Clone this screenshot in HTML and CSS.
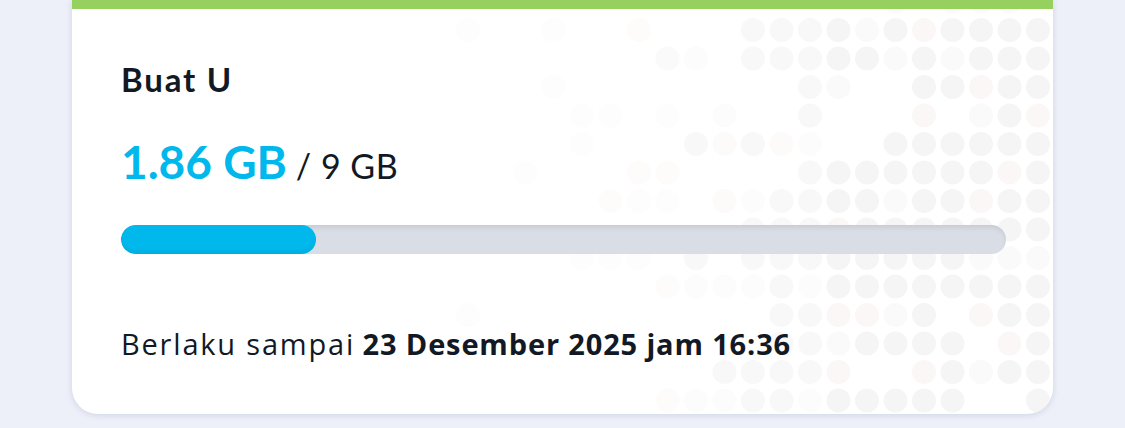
FILE: index.html
```html
<!DOCTYPE html>
<html lang="id">
<head>
<meta charset="utf-8">
<title>Kuota</title>
<link rel="stylesheet" href="styles.css">
</head>
<body>
<div class="page">
  <section class="card">
    <svg class="dots" viewBox="0 0 981 405" preserveAspectRatio="none" aria-hidden="true">
      <g id="dots"></g>
    </svg>
    <div class="content">
      <h2 class="title">Buat U</h2>
      <div class="usage"><span class="used">1.86 GB</span> <span class="total">/ 9 GB</span></div>
      <div class="track"><div class="fill" style="width:22%"></div></div>
      <p class="expiry"><span class="lead">Berlaku sampai</span> <strong>23 Desember 2025 jam 16:36</strong></p>
    </div>
  </section>
</div>
<script src="dots.js"></script>
</body>
</html>
```
FILE: dots.js
```js
(function () {
  var rows = {
    0: "c1f c2f c3f c5f",
    1: "c0g c1g c2g c3g c4p c5g c6f c7g c8g c9g c10g c14p c17f c20f",
    2: "c0g c1g c2g c3f c4g c5f c6g c7g c8g c9g c10g c12f c13g",
    3: "c0g c1g c2p c3g c4g c7f c8g c17f",
    4: "c0p c1g c2f c4p c8g c11f c13f c15f c16f",
    5: "c0g c1g c2g c3g c4g c5g c8f c9p c10g c11p c12g c16f",
    6: "c0g c1p c2g c3g c4g c5g c6g c7g c8g c13p c14p c18f",
    7: "c0g c1g c2p c3g c4g c5f c6g c7g c8g c9g c10f c11p c13f c14f c15p",
    8: "c0g c1g c2g c3g c4g c5g c6g c7p c8g c9g c10g",
    9: "c0f c1f c2f c3g c4g c5g c6g c7g c8g c9g c10g c12g c14f c15f c16f",
    10: "c0g c1g c2g c3g c4g c5g c6g c7g c8f c9g c10f c11f c12f c13p",
    11: "c0g c1g c2p c4g c5f c6p c7p c8g c9g c20f",
    12: "c0g c1p c3g c4g c5g c6g c7f c8g c9g",
    13: "c0g c1g c2f c3g c4p c7p c8g c9g c10g c11g",
    14: "c0g c3g c4g c5g c6g c7g c8f c9g c10g c11f c12f c13p"
  };
  var colors = { g: "#f5f5f6", p: "#fcf7f7", f: "#fafafa" };
  var ns = "http://www.w3.org/2000/svg";
  var g = document.getElementById("dots");
  Object.keys(rows).forEach(function (r) {
    rows[r].split(" ").forEach(function (tok) {
      var m = tok.match(/c(\d+)([gpf])/);
      var c = parseInt(m[1], 10);
      var x = 1038 - 28.5 * c - 72;
      var y = 1.5 + 28.5 * parseInt(r, 10) - 9;
      var el = document.createElementNS(ns, "circle");
      el.setAttribute("cx", x);
      el.setAttribute("cy", y);
      el.setAttribute("r", 12);
      el.setAttribute("fill", colors[m[2]]);
      var op = c < 8 ? 1 : (c < 13 ? 0.65 : 0.45);
      el.setAttribute("fill-opacity", op);
      g.appendChild(el);
    });
  });
})();
```
FILE: styles.css
```css
* { box-sizing: border-box; }
html, body { margin: 0; padding: 0; }
body {
  background: #edf0f9;
  font-family: "Lato", "Noto Sans", sans-serif;
  color: #121924;
}
.page {
  padding: 0 72px;
  height: 428px;
}
.card {
  position: relative;
  height: 414px;
  background: #ffffff;
  border-top: 9px solid #96d160;
  border-radius: 0 0 26px 26px;
  box-shadow: 0 1px 6px rgba(70, 80, 120, 0.18);
  overflow: hidden;
}
.dots {
  position: absolute;
  inset: 0;
  width: 100%;
  height: 100%;
}
.content {
  position: relative;
  z-index: 1;
  padding: 0 48px 0 49px;
  display: flex;
  flex-direction: column;
}
.title {
  margin: 50px 0 0;
  font-size: 33px;
  line-height: 40px;
  font-weight: 700;
  letter-spacing: 1.8px;
  color: #121924;
}
.usage {
  margin-top: 38px;
  line-height: 50px;
  display: flex;
  align-items: baseline;
  gap: 9px;
}
.used {
  font-size: 46px;
  font-weight: 700;
  color: #00b8ec;
}
.total {
  font-size: 34px;
  font-weight: 400;
  letter-spacing: 0.5px;
  color: #121924;
}
.track {
  margin-top: 34px;
  width: 885px;
  height: 29px;
  border-radius: 15px;
  background: #d9dee6;
  box-shadow: inset 0 3px 4px rgba(0, 0, 0, 0.08);
  overflow: hidden;
}
.fill {
  height: 100%;
  border-radius: 15px;
  background: #00b8ec;
  box-shadow: inset 0 -3px 4px rgba(0, 0, 0, 0.06);
}
.expiry {
  margin: 72px 0 0;
  font-family: "Open Sans", "Lato", sans-serif;
  font-size: 29px;
  line-height: 36px;
  color: #121924;
}
.expiry .lead {
  font-weight: 400;
  letter-spacing: 1.8px;
}
.expiry strong {
  font-weight: 700;
  letter-spacing: 0.85px;
}
```
